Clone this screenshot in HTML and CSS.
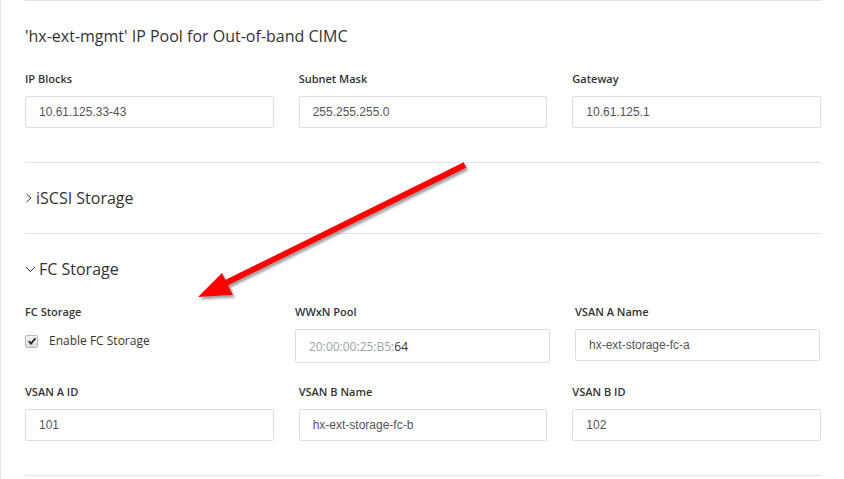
FILE: index.html
```html
<!DOCTYPE html>
<html lang="en">
<head>
    <meta charset="UTF-8">
    <title>HyperFlex Profile - Storage</title>
    <link rel="stylesheet" href="styles.css">
</head>
<body>
    <div class="page">
        <div class="section">
            <h3 class="section-title">'hx-ext-mgmt' IP Pool for Out-of-band CIMC</h3>
            <div class="grid-3">
                <div class="field">
                    <label for="ipBlocks">IP Blocks</label>
                    <input type="text" id="ipBlocks" value="10.61.125.33-43">
                </div>
                <div class="field">
                    <label for="subnetMask">Subnet Mask</label>
                    <input type="text" id="subnetMask" value="255.255.255.0">
                </div>
                <div class="field">
                    <label for="gateway">Gateway</label>
                    <input type="text" id="gateway" value="10.61.125.1">
                </div>
            </div>
        </div>

        <div class="section collapsed">
            <h3 class="toggle">
                <svg class="chevron" width="8" height="10" viewBox="0 0 8 10"><polyline points="1.5,1 6,5 1.5,9" fill="none" stroke="#333" stroke-width="1"/></svg>
                iSCSI Storage
            </h3>
        </div>

        <div class="section">
            <h3 class="toggle">
                <svg class="chevron" width="11" height="10" viewBox="0 0 11 10"><polyline points="1,3 5.5,7.5 10,3" fill="none" stroke="#333" stroke-width="1"/></svg>
                FC Storage
            </h3>
            <div class="grid-fc">
                <div class="field">
                    <label>FC Storage</label>
                    <label class="check">
                        <span class="box">
                            <svg width="10" height="10" viewBox="0 0 10 10"><polyline points="1.8,5.2 4,7.6 8.4,2.2" fill="none" stroke="#222" stroke-width="1.8"/></svg>
                        </span>
                        Enable FC Storage
                    </label>
                </div>
                <div class="field">
                    <label>WWxN Pool</label>
                    <div class="prefixed"><span class="prefix">20:00:00:25:B5:</span>64</div>
                </div>
                <div class="field">
                    <label for="vsanAName">VSAN A Name</label>
                    <input type="text" id="vsanAName" value="hx-ext-storage-fc-a">
                </div>
            </div>
            <div class="grid-3 row-gap">
                <div class="field">
                    <label for="vsanAId">VSAN A ID</label>
                    <input type="text" id="vsanAId" value="101">
                </div>
                <div class="field">
                    <label for="vsanBName">VSAN B Name</label>
                    <input type="text" id="vsanBName" value="hx-ext-storage-fc-b">
                </div>
                <div class="field">
                    <label for="vsanBId">VSAN B ID</label>
                    <input type="text" id="vsanBId" value="102">
                </div>
            </div>
        </div>
        <div class="section end"></div>
    </div>

    <!-- annotation arrow drawn over the screenshot -->
    <svg class="arrow" width="844" height="479" viewBox="0 0 844 479">
        <defs>
            <filter id="shadow" x="-10%" y="-10%" width="130%" height="130%">
                <feDropShadow dx="2" dy="2.5" stdDeviation="1" flood-color="#555" flood-opacity="0.55"/>
            </filter>
        </defs>
        <g filter="url(#shadow)" fill="#ff0000">
            <line x1="465" y1="165" x2="224" y2="284" stroke="#ff0000" stroke-width="6"/>
            <polygon points="198,297 222,273 233,295"/>
        </g>
    </svg>
</body>
</html>
```

FILE: styles.css
```css
body {
    margin: 0;
    background: #fff;
    color: #333;
    font-family: 'Open Sans', sans-serif;
    overflow: hidden;
}
.page {
    height: 479px;
    border-left: 1px solid #e3e3e3;
    padding: 0 23px 0 24px;
    box-sizing: border-box;
}
.section {
    border-top: 1px solid #e1e1e1;
    padding: 23px 0 34px;
}
.section.collapsed {
    padding-bottom: 23px;
}
.section.end {
    padding: 0;
}
.section-title {
    margin: 0 0 23px;
    font-size: 16px;
    font-weight: 400;
    line-height: 24px;
    color: #333;
}
.toggle {
    margin: 0;
    display: flex;
    align-items: center;
    font-size: 16px;
    font-weight: 400;
    line-height: 24px;
}
.chevron {
    margin-right: 3px;
}
.section .toggle + .grid-fc {
    margin-top: 23px;
}
.grid-3 {
    display: grid;
    grid-template-columns: repeat(3, 1fr);
    column-gap: 25px;
}
.grid-fc {
    display: grid;
    grid-template-columns: 245px 255px 245px;
    column-gap: 25px;
    align-items: start;
}
.row-gap {
    margin-top: 21px;
}
.field label {
    display: block;
    font-size: 11px;
    font-weight: 600;
    line-height: 16px;
    margin-bottom: 9px;
}
.field .check {
    display: flex;
    align-items: center;
    font-size: 12px;
    font-weight: 400;
    margin: 13px 0 0;
}
.box {
    width: 11px;
    height: 11px;
    border: 1px solid #b8b8b8;
    border-radius: 2px;
    background: linear-gradient(#f2f2f2, #dcdcdc);
    display: flex;
    align-items: center;
    justify-content: center;
    margin-right: 11px;
}
input[type=text] {
    display: block;
    width: 100%;
    height: 32px;
    box-sizing: border-box;
    padding: 0 13px;
    border: 1px solid #dcdfe6;
    border-radius: 2px;
    font-family: 'Liberation Sans', Arial, sans-serif;
    font-size: 12px;
    color: #555;
    background: #fff;
}
.prefixed {
    height: 34px;
    box-sizing: border-box;
    padding: 0 13px;
    border: 1px solid #dcdfe6;
    border-radius: 2px;
    display: flex;
    align-items: center;
    font-size: 12px;
    color: #333;
}
.prefix {
    color: #9aa5a1;
}
.arrow {
    position: absolute;
    left: 0;
    top: 0;
    pointer-events: none;
}
```
